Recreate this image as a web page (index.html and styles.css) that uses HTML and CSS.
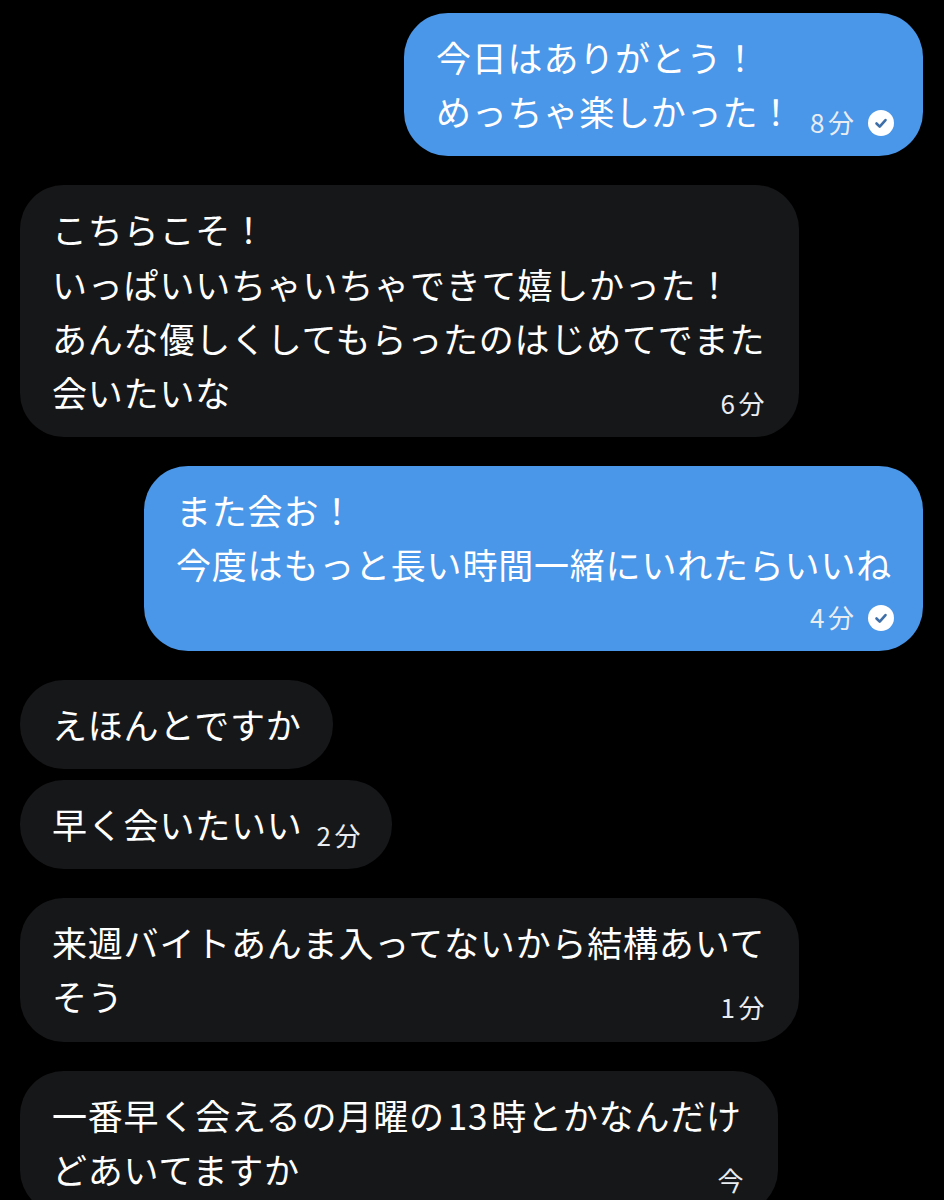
FILE: index.html
```html
<!DOCTYPE html>
<html lang="ja">
<head>
<meta charset="UTF-8" />
<meta name="viewport" content="width=device-width, initial-scale=1" />
<title>Chat</title>
<link rel="stylesheet" href="styles.css">
</head>
<body>
<div class="chat">

  <div class="bubble mine first">
    <div class="line">今日はありがとう！</div>
    <div class="last">
      <div class="line">めっちゃ楽しかった！</div>
      <div class="meta">
        <span class="time">8分</span>
        <svg class="check" viewBox="0 0 26 26"><circle cx="13" cy="13" r="13" fill="#fff"/><path d="M8.5 13.5l3.2 3.2 5.8-6.6" fill="none" stroke="#3f6fa8" stroke-width="2.6" stroke-linecap="round" stroke-linejoin="round"/></svg>
      </div>
    </div>
  </div>

  <div class="bubble theirs wide">
    <div class="line">こちらこそ！</div>
    <div class="line">いっぱいいちゃいちゃできて嬉しかった！</div>
    <div class="line">あんな優しくしてもらったのはじめてでまた</div>
    <div class="last">
      <div class="line">会いたいな</div>
      <div class="meta"><span class="time">6分</span></div>
    </div>
  </div>

  <div class="bubble mine wide">
    <div class="line">また会お！</div>
    <div class="line">今度はもっと長い時間一緒にいれたらいいね</div>
    <div class="meta own-row">
      <span class="time">4分</span>
      <svg class="check" viewBox="0 0 26 26"><circle cx="13" cy="13" r="13" fill="#fff"/><path d="M8.5 13.5l3.2 3.2 5.8-6.6" fill="none" stroke="#3f6fa8" stroke-width="2.6" stroke-linecap="round" stroke-linejoin="round"/></svg>
    </div>
  </div>

  <div class="bubble theirs tight">
    <div class="line">えほんとですか</div>
  </div>

  <div class="bubble theirs short">
    <div class="last">
      <div class="line">早く会いたいい</div>
      <div class="meta"><span class="time">2分</span></div>
    </div>
  </div>

  <div class="bubble theirs wide">
    <div class="line">来週バイトあんま入ってないから結構あいて</div>
    <div class="last">
      <div class="line">そう</div>
      <div class="meta"><span class="time">1分</span></div>
    </div>
  </div>

  <div class="bubble theirs latest">
    <div class="line">一番早く会えるの月曜の<span class="num">13</span>時とかなんだけ</div>
    <div class="last">
      <div class="line">どあいてますか</div>
      <div class="meta"><span class="time">今</span></div>
    </div>
  </div>

</div>
</body>
</html>
```

FILE: styles.css
```css
html, body {
  margin: 0;
  height: 1200px;
  overflow: hidden;
  background: #000;
}
body {
  font-family: "Noto Sans CJK JP", "Noto Sans", sans-serif;
  color: #fff;
}
.chat {
  display: flex;
  flex-direction: column;
  align-items: flex-start;
  gap: 29px;
  padding: 13px 21px 0 20px;
}
.bubble {
  box-sizing: border-box;
  padding: 17px 31px 18px 32px;
  border-radius: 44px;
  white-space: nowrap;
}
.bubble.mine {
  align-self: flex-end;
  background: #4a96e8;
}
.bubble.theirs {
  background: #161719;
}
.bubble.first {
  width: 519px;
}
.bubble.wide {
  width: 779px;
}
.bubble.latest {
  width: 758px;
}
.bubble.short {
  width: 372px;
  padding-right: 28px;
}
.bubble.tight {
  margin-bottom: -18px;
}
.line {
  font-size: 35px;
  line-height: 54.2px;
  letter-spacing: 0.8px;
}
.num {
  margin: 0 3px;
}
.last {
  display: flex;
  align-items: flex-start;
  justify-content: space-between;
}
.meta {
  display: flex;
  align-items: center;
  gap: 10.5px;
  height: 26px;
  margin-top: 26px;
  margin-left: 11px;
}
.mine .meta {
  margin-right: -2px;
}
.meta.own-row {
  justify-content: flex-end;
  margin-top: 13.6px;
  margin-bottom: 1.6px;
}
.time {
  margin-top: -3px;
  font-size: 26px;
  letter-spacing: 3.5px;
  color: #e9edf2;
}
.check {
  width: 26px;
  height: 26px;
}
```
